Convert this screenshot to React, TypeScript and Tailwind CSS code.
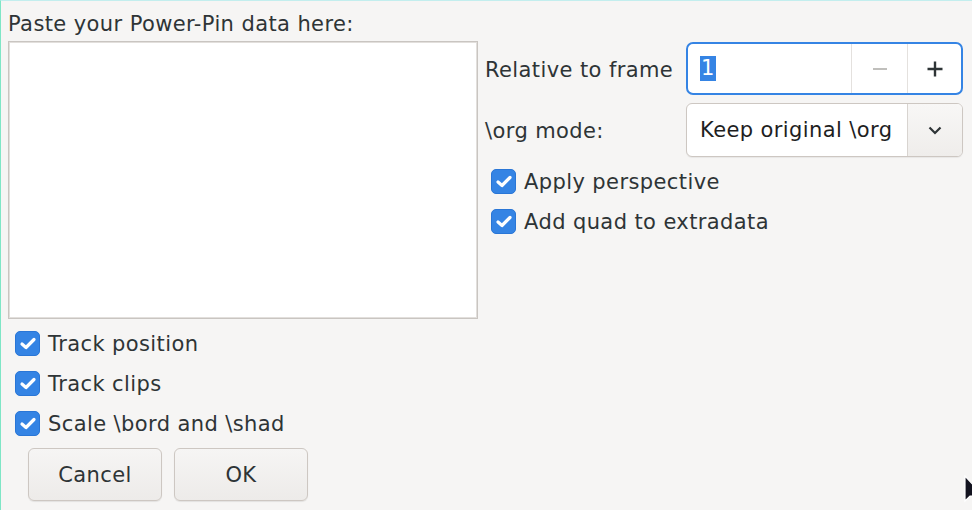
import React from "react";

const Check = ({ label }: { label: string }) => (
  <label className="flex items-center h-[40px] gap-[8px]">
    <span className="w-[25px] h-[25px] rounded-[5px] bg-[#3584e4] border border-[#2a76d6] flex items-center justify-center shrink-0">
      <svg width="18" height="15" viewBox="0 0 18 15">
        <path d="M3 8 L7 11.5 L15 3.5" fill="none" stroke="#fff" strokeWidth="3.2" strokeLinecap="round" strokeLinejoin="round" />
      </svg>
    </span>
    <span className="pt-[2px]">{label}</span>
  </label>
);

const Button = ({ children }: { children: React.ReactNode }) => (
  <button className="w-[134px] h-[53px] rounded-[6px] border border-[#cdc7c2] bg-gradient-to-b from-[#f6f5f4] to-[#edebe9] shadow-[0_1px_1px_rgba(0,0,0,0.08)] text-[#2e3436] tracking-[0.4px]">
    {children}
  </button>
);

export default function App() {
  return (
    <div
      className="relative w-[972px] h-[510px] overflow-hidden bg-[#f6f5f4] border-l border-t border-l-[#7fe6c6] border-t-[#c3eeee] text-[#2e3436] text-[21px] leading-[24px] tracking-[0.4px]"
      style={{ fontFamily: '"DejaVu Sans", "Liberation Sans", sans-serif' }}
    >
      <div className="flex">
        {/* left column */}
        <div className="w-[477px] pl-[7px] flex flex-col">
          <div className="mt-[11px] mb-[5px]">Paste your Power-Pin data here:</div>
          <div className="w-[470px] h-[278px] bg-white border border-[#c9c5c1] shadow-[inset_0_0_0_1px_#e2dfdc]" />
          <div className="mt-[4px] pl-[7px] flex flex-col">
            <Check label="Track position" />
            <Check label="Track clips" />
            <Check label="Scale \bord and \shad" />
          </div>
          <div className="mt-[5px] ml-[20px] flex gap-[12px]">
            <Button>Cancel</Button>
            <Button>OK</Button>
          </div>
        </div>

        {/* right column */}
        <div className="ml-[7px] pt-[41px] flex flex-col">
          <div className="grid grid-cols-[201px_277px] gap-y-[8px] items-center">
            <div className="pt-[2px]">Relative to frame</div>
            <div className="h-[53px] rounded-[7px] border-2 border-[#3584e4] bg-white flex items-stretch">
              <div className="flex-1 flex items-center pl-[12px]">
                <span className="bg-[#3584e4] text-white px-[1px] leading-[25px]">1</span>
              </div>
              <div className="w-[56px] border-l border-[#e4e1de] flex items-center justify-center">
                <svg width="18" height="18" viewBox="0 0 18 18">
                  <path d="M2 9 H16" stroke="#c0bfbc" strokeWidth="2" />
                </svg>
              </div>
              <div className="w-[54px] border-l border-[#e4e1de] flex items-center justify-center">
                <svg width="18" height="18" viewBox="0 0 18 18">
                  <path d="M1.5 9 H16.5 M9 1.5 V16.5" stroke="#2e3436" strokeWidth="2.4" />
                </svg>
              </div>
            </div>

            <div className="pt-[2px]">\org mode:</div>
            <div className="h-[54px] rounded-[6px] border border-[#cdc7c2] bg-white flex items-stretch overflow-hidden shadow-[0_1px_1px_rgba(0,0,0,0.06)]">
              <div className="flex-1 flex items-center pl-[13px] text-[#1e1e1e] whitespace-nowrap overflow-hidden">Keep original \org</div>
              <div className="w-[55px] border-l border-[#d8d4d0] bg-gradient-to-b from-[#f8f7f6] to-[#efedeb] flex items-center justify-center shrink-0">
                <svg width="16" height="10" viewBox="0 0 16 10">
                  <path d="M2.5 2.5 L8 8 L13.5 2.5" fill="none" stroke="#2e3436" strokeWidth="2.2" />
                </svg>
              </div>
            </div>
          </div>
          <div className="mt-[4px] pl-[6px] flex flex-col">
            <Check label="Apply perspective" />
            <Check label="Add quad to extradata" />
          </div>
        </div>
      </div>

      {/* mouse pointer */}
      <svg className="absolute left-[962px] top-[474px]" width="14" height="30" viewBox="0 0 14 30">
        <path d="M2 1 L2 26 L7 21 L14 21 L14 14 Z" fill="#13131f" stroke="#ffffff" strokeWidth="1.2" />
      </svg>
    </div>
  );
}
